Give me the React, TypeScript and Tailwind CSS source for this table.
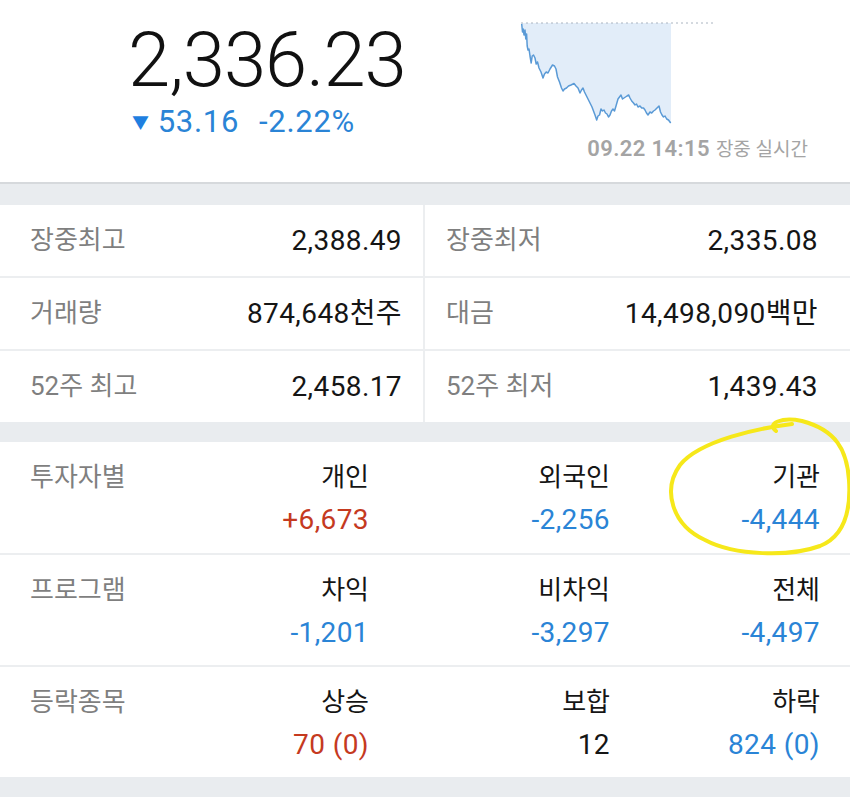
import React from "react";

const FONT = { fontFamily: "Roboto, 'Noto Sans CJK KR', sans-serif" };

const line: [number, number][] = [
  [1.7, 4], [2.5, 12], [3.2, 9], [4, 15], [5, 10], [5.8, 19], [6.6, 14], [7.2, 26], [8, 30], [9, 29], [10, 36],
  [11.2, 43], [12.2, 36], [13.5, 35], [15, 38], [16.2, 44], [17.5, 42], [19, 48], [21, 52], [23, 58],
  [24.5, 54], [26.2, 52], [28, 53], [30, 49], [32.5, 45], [34.5, 46], [36, 49], [37.5, 57], [39.5, 62],
  [41.5, 68], [43, 71], [44.5, 69], [46.5, 68], [48.5, 66], [51, 65], [54, 63.5], [56, 66], [58, 68],
  [60, 73], [61.5, 70], [63, 68], [64.5, 72], [66, 75], [68, 79], [70, 83], [72, 87], [73.5, 91], [75, 95],
  [76.7, 100], [78, 96], [79.5, 95], [81, 89], [82.5, 91], [84, 90], [85.5, 93], [87, 94], [88.5, 97],
  [90, 95], [91.5, 91], [93, 89], [94.5, 91], [96, 86], [98, 79], [99.5, 77], [101, 75], [102.5, 79],
  [104, 78], [105.5, 77], [107, 76], [108.7, 75], [110, 78], [111.7, 81], [113.5, 83], [115, 85],
  [116.5, 84], [118, 87], [120, 86], [121.7, 88], [123.5, 88], [125, 90], [126.5, 93], [128, 95],
  [130, 92], [131.7, 93], [133.5, 91], [135, 90], [137, 88], [139, 86], [140.5, 92], [142, 95], [143.5, 97],
  [145, 96], [146.7, 99], [148.5, 100], [150.7, 103],
];

function Chart() {
  const pts = line.map(([x, y]) => `${x},${y}`).join(" ");
  return (
    <svg width="200" height="106" viewBox="0 0 200 106" className="block">
      <polygon points={`1.5,3 ${pts} 151,103 151,3`} fill="#e2edf9" />
      <line x1="1" y1="3" x2="195" y2="3" stroke="#aab4c0" strokeWidth="1" strokeDasharray="2 3" />
      <polyline points={pts} fill="none" stroke="#5a9ad6" strokeWidth="1.5" strokeLinejoin="round" />
    </svg>
  );
}

const stats = [
  ["장중최고", "2,388.49", "장중최저", "2,335.08"],
  ["거래량", "874,648천주", "대금", "14,498,090백만"],
  ["52주 최고", "2,458.17", "52주 최저", "1,439.43"],
];

type Cell = { head: string; value: string; color: string };
const investors: { label: string; cells: Cell[] }[] = [
  {
    label: "투자자별",
    cells: [
      { head: "개인", value: "+6,673", color: "text-[#c53a1f]" },
      { head: "외국인", value: "-2,256", color: "text-[#2a84d6]" },
      { head: "기관", value: "-4,444", color: "text-[#2a84d6]" },
    ],
  },
  {
    label: "프로그램",
    cells: [
      { head: "차익", value: "-1,201", color: "text-[#2a84d6]" },
      { head: "비차익", value: "-3,297", color: "text-[#2a84d6]" },
      { head: "전체", value: "-4,497", color: "text-[#2a84d6]" },
    ],
  },
  {
    label: "등락종목",
    cells: [
      { head: "상승", value: "70 (0)", color: "text-[#c53a1f]" },
      { head: "보합", value: "12", color: "text-[#151515]" },
      { head: "하락", value: "824 (0)", color: "text-[#2a84d6]" },
    ],
  },
];

export default function App() {
  return (
    <div className="relative h-[804px] w-[850px] overflow-hidden bg-white" style={FONT}>
      {/* Index header */}
      <div className="flex h-[182px] bg-white">
        <div className="w-[520px] pl-[128px] pt-[22px]">
          <div className="text-[76px] font-light leading-[76px] tracking-[-1px] text-[#111]">2,336.23</div>
          <div className="mt-[6px] flex items-center text-[31px] leading-[34px] tracking-[0.7px] text-[#2a84d6]">
            <span className="ml-[4px] mr-[8px] mt-[2px] text-[17px] text-[#1f7fe0]">▼</span>
            <span>53.16</span>
            <span className="ml-[20px]">-2.22%</span>
          </div>
        </div>
        <div className="flex w-[288px] flex-col pt-[20px]">
          <Chart />
          <div className="mt-[6px] self-end whitespace-nowrap text-[#a4a4a4]">
            <span className="text-[22px] font-semibold tracking-[0.4px]">09.22 14:15</span>
            <span className="ml-[6px] text-[19px]">장중 실시간</span>
          </div>
        </div>
      </div>
      <div className="h-[2px] bg-[#d6d9dc]" />
      <div className="h-[21px] bg-[#e9ecef]" />

      {/* Stats grid */}
      <div className="flex flex-col gap-[2px] bg-[#eceef0]">
        {stats.map((r, i) => (
          <div key={i} className="grid h-[71px] grid-cols-[423px_425px] gap-x-[2px]">
            <div className="flex items-center justify-between bg-white pl-[30px] pr-[21px]">
              <span className="text-[26px] text-[#7f7f7f]">{r[0]}</span>
              <span className="text-[28px] tracking-[0.4px] text-[#151515]">{r[1]}</span>
            </div>
            <div className="flex items-center justify-between bg-white pl-[21px] pr-[32px]">
              <span className="text-[26px] text-[#7f7f7f]">{r[2]}</span>
              <span className="text-[28px] tracking-[0.4px] text-[#151515]">{r[3]}</span>
            </div>
          </div>
        ))}
      </div>
      <div className="h-[20px] bg-[#e9ecef]" />

      {/* Investor table */}
      <div className="flex flex-col gap-[2px] bg-[#eceef0]">
        {investors.map((row, i) => (
          <div
            key={row.label}
            className={`grid grid-cols-[211px_128px_241px_210px] bg-white pl-[30px] pt-[18px] ${i === 0 ? "h-[111px]" : "h-[110px]"}`}
          >
            <div className="text-[26px] leading-[34px] text-[#7f7f7f]">{row.label}</div>
            {row.cells.map((c) => (
              <div key={c.head} className="flex flex-col items-end">
                <span className="text-[26px] leading-[34px] text-[#151515]">{c.head}</span>
                <span className={`mt-[8px] text-[28px] leading-[36px] tracking-[0.4px] ${c.color}`}>{c.value}</span>
              </div>
            ))}
          </div>
        ))}
      </div>
      <div className="h-[20px] bg-[#e9ecef]" />

      {/* hand-drawn highlight */}
      <svg className="pointer-events-none absolute left-0 top-0" width="850" height="804">
        <path
          d="M 792 424 C 760 428, 700 440, 680 465 C 662 490, 672 525, 705 540 C 735 556, 790 557, 820 546 C 845 536, 851 510, 849 480 C 847 450, 836 430, 802 421 C 782 417, 766 423, 776 431"
          fill="none"
          stroke="#f6e81a"
          strokeWidth="4"
          strokeLinecap="round"
        />
      </svg>
    </div>
  );
}
